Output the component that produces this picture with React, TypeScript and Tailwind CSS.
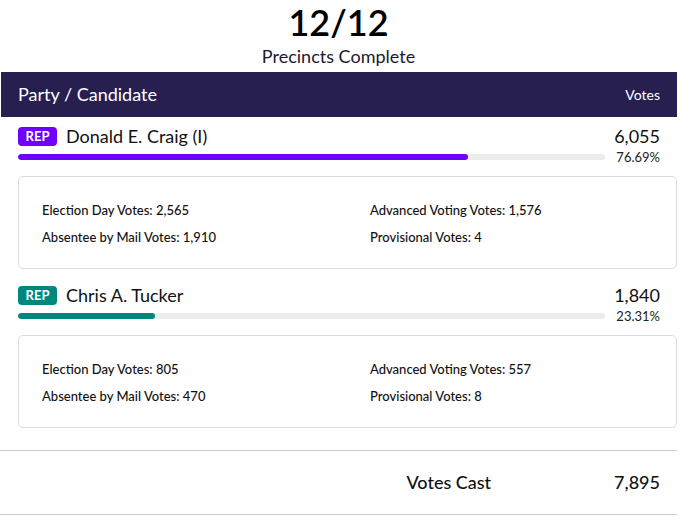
import React from "react";

type Candidate = {
  party: string;
  name: string;
  votes: string;
  pct: number;
  color: string;
  details: [string, string][];
};

const candidates: Candidate[] = [
  {
    party: "REP",
    name: "Donald E. Craig (I)",
    votes: "6,055",
    pct: 76.69,
    color: "bg-[#6f00ff]",
    details: [
      ["Election Day Votes", "2,565"],
      ["Advanced Voting Votes", "1,576"],
      ["Absentee by Mail Votes", "1,910"],
      ["Provisional Votes", "4"],
    ],
  },
  {
    party: "REP",
    name: "Chris A. Tucker",
    votes: "1,840",
    pct: 23.31,
    color: "bg-[#00877d]",
    details: [
      ["Election Day Votes", "805"],
      ["Advanced Voting Votes", "557"],
      ["Absentee by Mail Votes", "470"],
      ["Provisional Votes", "8"],
    ],
  },
];

function CandidateRow({ c }: { c: Candidate }) {
  return (
    <div>
      <div className="pl-[18px] pr-[17px]">
        <div className="flex items-center justify-between h-[24px]">
          <div className="flex items-center gap-[9px]">
            <span className={`${c.color} text-white text-[13px] font-bold leading-none rounded-[4px] w-[39px] h-[19px] flex items-center justify-center`}>
              {c.party}
            </span>
            <span className="text-[18px] leading-6 text-[#111]">{c.name}</span>
          </div>
          <span className="text-[18px] leading-6 text-[#111]">{c.votes}</span>
        </div>
        <div className="flex items-center justify-between mt-[1px]">
          <div className="h-[6px] w-[587px] rounded-full bg-[#ececec] overflow-hidden">
            <div className={`h-full rounded-full ${c.color}`} style={{ width: `${c.pct}%` }} />
          </div>
          <span className="text-[13px] leading-4 text-[#222]">{c.pct.toFixed(2)}%</span>
        </div>
      </div>
      <div className="ml-[18px] mt-[11px] border border-[#dcdcdc] rounded-[5px] pl-[23px] pt-[23px] pb-[21px] grid grid-cols-[328px_1fr] gap-y-[7px]">
        {c.details.map(([label, value]) => (
          <div key={label} className="text-[13px] leading-5 font-medium text-[#111]">
            {label}: {value}
          </div>
        ))}
      </div>
    </div>
  );
}

export default function App() {
  return (
    <div className="w-[677px] bg-white text-[#111] font-['Lato',sans-serif]">
      <div className="flex flex-col items-center">
        <h1 className="text-[36px] font-semibold leading-[44px] text-black">12/12</h1>
        <p className="text-[18px] leading-6 text-[#1a1a2e]">Precincts Complete</p>
      </div>
      <div className="ml-[1px] mt-[4px] h-[45px] bg-[#271f4f] text-white flex items-center justify-between pl-[17px] pr-[17px]">
        <span className="text-[18px]">Party / Candidate</span>
        <span className="text-[14px]">Votes</span>
      </div>
      <div className="pt-[7px] flex flex-col gap-[14px]">
        {candidates.map((c) => (
          <CandidateRow key={c.name} c={c} />
        ))}
      </div>
      <div className="mt-[22px] border-t border-b border-[#cfcfcf] h-[65px] flex items-center justify-end pr-[17px]">
        <span className="text-[18px] font-medium mr-[123px]">Votes Cast</span>
        <span className="text-[18px] font-medium">7,895</span>
      </div>
    </div>
  );
}
